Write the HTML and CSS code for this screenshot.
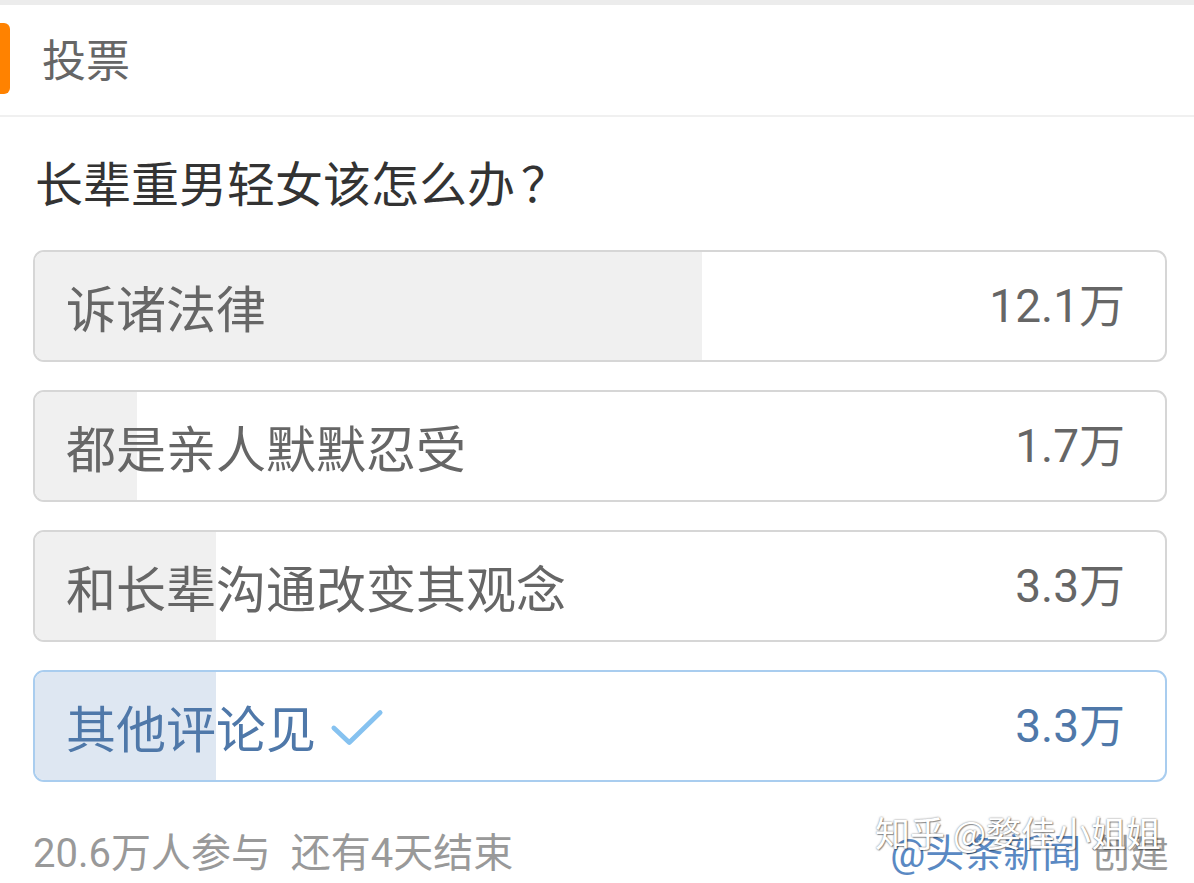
FILE: index.html
```html
<!DOCTYPE html>
<html lang="zh-CN">
<head>
<meta charset="utf-8">
<link rel="stylesheet" href="styles.css">
</head>
<body>
<div class="topband"></div>
<header class="head">
  <span class="mark"></span>
  <span class="head-title">投票</span>
</header>
<main class="poll">
  <h1 class="question">长辈重男轻女该怎么办<span class="qmark">？</span></h1>
  <div class="options">
    <div class="option">
      <div class="fill" style="width:59%"></div>
      <span class="label">诉诸法律</span>
      <span class="count">12.1万</span>
    </div>
    <div class="option">
      <div class="fill" style="width:9%"></div>
      <span class="label">都是亲人默默忍受</span>
      <span class="count">1.7万</span>
    </div>
    <div class="option">
      <div class="fill" style="width:16%"></div>
      <span class="label">和长辈沟通改变其观念</span>
      <span class="count">3.3万</span>
    </div>
    <div class="option chosen">
      <div class="fill" style="width:16%"></div>
      <span class="label">其他评论见<svg class="check" viewBox="0 0 56 40" width="54" height="40"><path d="M4 20 L20 35 L52 4" fill="none" stroke="#86c2f0" stroke-width="5" stroke-linecap="round" stroke-linejoin="round"/></svg></span>
      <span class="count">3.3万</span>
    </div>
  </div>
  <footer class="foot">
    <span class="stats">20.6万人参与&nbsp;&nbsp;还有4天结束</span>
    <span class="creator"><span class="author">@头条新闻</span> 创建</span>
    <span class="watermark">知乎 @婺佳小姐姐</span>
  </footer>
</main>
</body>
</html>
```
FILE: styles.css
```css
* { box-sizing: border-box; }
html, body { margin: 0; padding: 0; background: #fff; }
body {
  width: 1194px;
  height: 883px;
  overflow: hidden;
  font-family: "Roboto", "Noto Sans CJK SC", sans-serif;
  color: #333;
}
.topband { height: 5px; background: #ececec; }
.head {
  height: 112px;
  display: flex;
  align-items: center;
  border-bottom: 2px solid #f0f0f0;
  padding-bottom: 4px;
}
.mark {
  width: 10px;
  height: 71px;
  background: #ff8200;
  border-radius: 0 6px 6px 0;
}
.head-title {
  margin-left: 32px;
  font-family: "Noto Sans CJK SC", sans-serif;
  font-size: 44px;
  color: #666;
  line-height: 1;
}
.poll { padding: 0 27px 0 33px; position: relative; }
.question {
  margin: 0;
  height: 133px;
  display: flex;
  align-items: center;
  padding-left: 2px;
  padding-bottom: 6px;
  font-family: "Noto Sans CJK SC", sans-serif;
  font-weight: 400;
  font-size: 48px;
  color: #333;
  line-height: 1;
}
.qmark { margin-left: 6px; }
.options { display: flex; flex-direction: column; gap: 28px; }
.option {
  position: relative;
  height: 112px;
  border: 2px solid #d6d6d6;
  border-radius: 11px;
  overflow: hidden;
  display: flex;
  align-items: center;
  justify-content: space-between;
  padding: 0 40px 0 31px;
  color: #666;
}
.fill {
  position: absolute;
  left: 0; top: 0; bottom: 0;
  background: #f0f0f0;
}
.label, .count { position: relative; line-height: 1; }
.label {
  font-family: "Noto Sans CJK SC", sans-serif;
  font-size: 50px;
  display: flex;
  align-items: center;
}
.count { font-size: 46px; }
.option.chosen { border-color: #a9cdef; color: #4f78a9; }
.option.chosen .fill { background: #dee7f2; }
.check { margin-left: 14px; margin-top: 4px; }
.foot {
  height: 102px;
  display: flex;
  align-items: center;
  justify-content: space-between;
  padding-top: 42px;
  position: relative;
}
.stats {
  font-size: 40px;
  color: #999;
  line-height: 1;
}
.creator {
  font-size: 39px;
  color: #999;
  line-height: 1;
  margin-right: -2px;
}
.author { color: #5a89c3; }
.watermark {
  position: absolute;
  right: 6px;
  top: 32px;
  font-family: "Noto Sans CJK SC", sans-serif;
  font-size: 35px;
  color: #fff;
  line-height: 1;
  text-shadow: 0 0 2px rgba(0,0,0,0.55), 1px 1px 1px rgba(0,0,0,0.35);
}
```
